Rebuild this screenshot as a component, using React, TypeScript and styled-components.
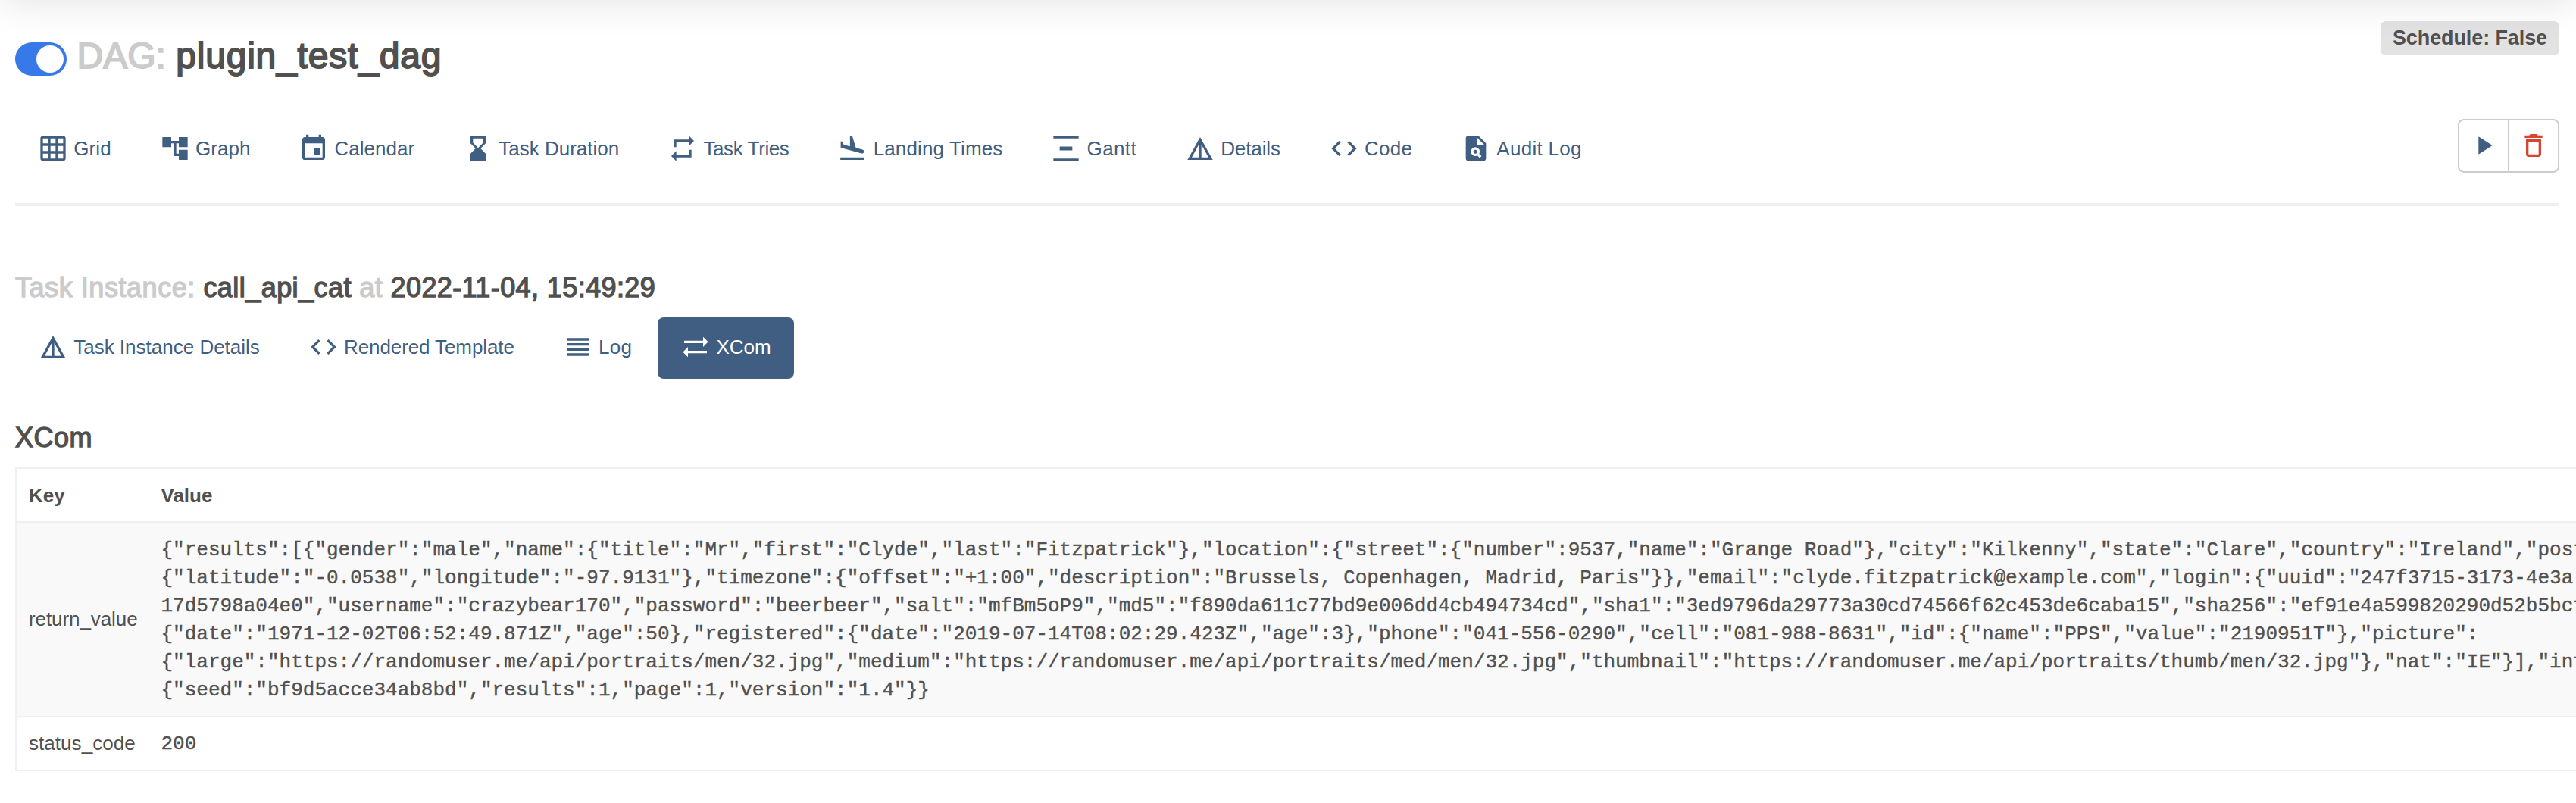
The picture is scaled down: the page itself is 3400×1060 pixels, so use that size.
import React from "react";
import styled, { createGlobalStyle, css } from "styled-components";
import {
  MdGridOn, MdAccountTree, MdEvent, MdHourglassBottom, MdRepeat, MdFlightLand, MdVerticalDistribute,
  MdDetails, MdCode, MdPlagiarism, MdReorder, MdSyncAlt, MdPlayArrow, MdDeleteOutline,
} from "react-icons/md";
import type { IconType } from "react-icons";

const sans = `"Liberation Sans", Arial, sans-serif`;
const mono = `"Liberation Mono", "Courier New", monospace`;

const GlobalStyle = createGlobalStyle`
  * { box-sizing: border-box; }
  body { margin: 0; background: #fff; color: #51504f; font: 26px/37.14px ${sans}; overflow: hidden; }
`;

const Page = styled.div`
  position: relative;
  width: 3400px;
  height: 1060px;
  padding: 28px 22px 0 20px;
  overflow: hidden;
`;

const NavbarShadow = styled.div`
  position: absolute;
  left: 0;
  right: 0;
  top: -60px;
  height: 60px;
  box-shadow: 0 1px 52px rgba(0, 0, 0, 0.12);
`;

const Header = styled.header`
  display: flex;
  justify-content: space-between;
  align-items: flex-start;
  height: 129px;
`;

const TitleGroup = styled.div`
  display: flex;
  align-items: flex-start;
  padding-top: 12px;
`;

const Toggle = styled.span`
  display: flex;
  justify-content: flex-end;
  width: 68px;
  height: 44px;
  margin: 16px 13.5px 0 0;
  padding: 4px;
  border-radius: 22px;
  background: #3779e8;
`;

const Knob = styled.span`
  width: 36px;
  height: 36px;
  border-radius: 50%;
  background: #fff;
`;

const Medium = css`
  margin: 0;
  font-weight: 400;
  white-space: pre;
`;

const Title = styled.h3`
  ${Medium}
  font-size: 48px;
  line-height: 68px;
  -webkit-text-stroke: 1.9px currentColor;
`;

const Heading = styled.h4`
  ${Medium}
  font-size: 36px;
  line-height: 40px;
  -webkit-text-stroke: 1.4px currentColor;
`;

const Run = styled.span<{ $muted?: boolean; $track?: number }>`
  color: ${(p) => (p.$muted ? "#cbcbcb" : "inherit")};
  letter-spacing: ${(p) => p.$track ?? 0}px;
`;

const Schedule = styled.span`
  height: 45px;
  padding: 0 16px;
  border-radius: 7px;
  background: #e2e2e2;
  font-size: 27px;
  font-weight: 700;
  line-height: 44px;
  letter-spacing: -0.1px;
`;

const Toolbar = styled.div`
  display: flex;
  justify-content: space-between;
  align-items: flex-start;
  height: 115px;
  border-bottom: 4px solid #efefef;
`;

const Pills = styled.nav`
  display: flex;
  gap: 4px;
`;

const Pill = styled.a<{ $active?: boolean }>`
  display: flex;
  gap: 7.2px;
  height: 81px;
  padding: 19px 30px 0;
  border-radius: 8px;
  background: ${(p) => (p.$active ? "#405e81" : "transparent")};
  color: ${(p) => (p.$active ? "#fff" : "#405e81")};
  line-height: 40px;
  white-space: nowrap;
`;

const ButtonGroup = styled.div`
  display: flex;
`;

const IconButton = styled.button<{ $danger?: boolean }>`
  display: flex;
  width: 68px;
  height: 71px;
  padding: 13px 12px;
  border: 2px solid #ccc;
  border-radius: ${(p) => (p.$danger ? "0 8px 8px 0" : "8px 0 0 8px")};
  margin-left: ${(p) => (p.$danger ? "-2px" : "0")};
  background: #fff;
  color: ${(p) => (p.$danger ? "#d5462f" : "#405e81")};
`;

const TaskSection = styled.section`
  padding-top: 88px;
`;

const PillsBlock = styled.div`
  margin-top: 19px;
`;

const XComSection = styled.section`
  padding-top: 58px;
`;

const Table = styled.div`
  width: 3600px;
  margin-top: 19px;
  border: 2px solid #f0f0f0;
`;

const Row = styled.div<{ $striped?: boolean; $head?: boolean }>`
  display: grid;
  grid-template-columns: 174.5px 1fr;
  align-items: center;
  padding: 16.5px 16px 15.5px;
  background: ${(p) => (p.$striped ? "#f9f9f9" : "#fff")};
  font-weight: ${(p) => (p.$head ? 700 : 400)};
  & + & { border-top: 2px solid #f0f0f0; }
`;

const Code = styled.code`
  display: block;
  margin: 1px 0 -1px;
  font: 26px/37.14px ${mono};
  letter-spacing: 0.004px;
  -webkit-text-stroke: 0.4px currentColor;
  white-space: pre;
`;

type Item = { icon: IconType; label: string; track?: number; active?: boolean };

const dagLinks: Item[] = [
  { icon: MdGridOn, label: "Grid", track: 0.15 },
  { icon: MdAccountTree, label: "Graph" },
  { icon: MdEvent, label: "Calendar", track: 0 },
  { icon: MdHourglassBottom, label: "Task Duration" },
  { icon: MdRepeat, label: "Task Tries", track: -0.4 },
  { icon: MdFlightLand, label: "Landing Times", track: 0.13 },
  { icon: MdVerticalDistribute, label: "Gantt", track: 0.35 },
  { icon: MdDetails, label: "Details", track: -0.1 },
  { icon: MdCode, label: "Code", track: 0.2 },
  { icon: MdPlagiarism, label: "Audit Log", track: 0.3 },
];

const taskLinks: Item[] = [
  { icon: MdDetails, label: "Task Instance Details" },
  { icon: MdCode, label: "Rendered Template", track: -0.1 },
  { icon: MdReorder, label: "Log", track: 0.3 },
  { icon: MdSyncAlt, label: "XCom", active: true },
];

const returnValue = [
  `{"results":[{"gender":"male","name":{"title":"Mr","first":"Clyde","last":"Fitzpatrick"},"location":{"street":{"number":9537,"name":"Grange Road"},"city":"Kilkenny","state":"Clare","country":"Ireland","postcode"`,
  `{"latitude":"-0.0538","longitude":"-97.9131"},"timezone":{"offset":"+1:00","description":"Brussels, Copenhagen, Madrid, Paris"}},"email":"clyde.fitzpatrick@example.com","login":{"uuid":"247f3715-3173-4e3a-`,
  `17d5798a04e0","username":"crazybear170","password":"beerbeer","salt":"mfBm5oP9","md5":"f890da611c77bd9e006dd4cb494734cd","sha1":"3ed9796da29773a30cd74566f62c453de6caba15","sha256":"ef91e4a599820290d52b5bcf`,
  `{"date":"1971-12-02T06:52:49.871Z","age":50},"registered":{"date":"2019-07-14T08:02:29.423Z","age":3},"phone":"041-556-0290","cell":"081-988-8631","id":{"name":"PPS","value":"2190951T"},"picture":`,
  `{"large":"https://randomuser.me/api/portraits/men/32.jpg","medium":"https://randomuser.me/api/portraits/med/men/32.jpg","thumbnail":"https://randomuser.me/api/portraits/thumb/men/32.jpg"},"nat":"IE"}],"info":`,
  `{"seed":"bf9d5acce34ab8bd","results":1,"page":1,"version":"1.4"}}`,
].join("\n");

const Links = ({ items }: { items: Item[] }) => (
  <Pills>
    {items.map(({ icon: Icon, label, track, active }) => (
      <Pill key={label} $active={active}>
        <Icon size={40} />
        <Run $track={track}>{label}</Run>
      </Pill>
    ))}
  </Pills>
);

export default function App() {
  return (
    <>
      <GlobalStyle />
      <Page>
        <NavbarShadow />
        <Header>
          <TitleGroup>
            <Toggle><Knob /></Toggle>
            <Title>
              <Run $muted>DAG: </Run>
              <Run $track={0.8}>plugin_test_dag</Run>
            </Title>
          </TitleGroup>
          <Schedule>Schedule: False</Schedule>
        </Header>
        <Toolbar>
          <Links items={dagLinks} />
          <ButtonGroup>
            <IconButton aria-label="Trigger DAG"><MdPlayArrow size={40} /></IconButton>
            <IconButton aria-label="Delete DAG" $danger><MdDeleteOutline size={40} /></IconButton>
          </ButtonGroup>
        </Toolbar>
        <TaskSection>
          <Heading>
            <Run $muted $track={0.55}>Task Instance: </Run>
            <Run $track={0.45}>call_api_cat</Run>
            <Run $muted $track={0.4}> at </Run>
            <Run $track={0.4}>2022-11-04, 15:49:29</Run>
          </Heading>
          <PillsBlock><Links items={taskLinks} /></PillsBlock>
        </TaskSection>
        <XComSection>
          <Heading><Run $track={0.5}>XCom</Run></Heading>
          <Table>
            <Row $head><span>Key</span><span>Value</span></Row>
            <Row $striped><Run $track={-0.08}>return_value</Run><Code>{returnValue}</Code></Row>
            <Row><Run $track={0.05}>status_code</Run><Code>200</Code></Row>
          </Table>
        </XComSection>
      </Page>
    </>
  );
}
